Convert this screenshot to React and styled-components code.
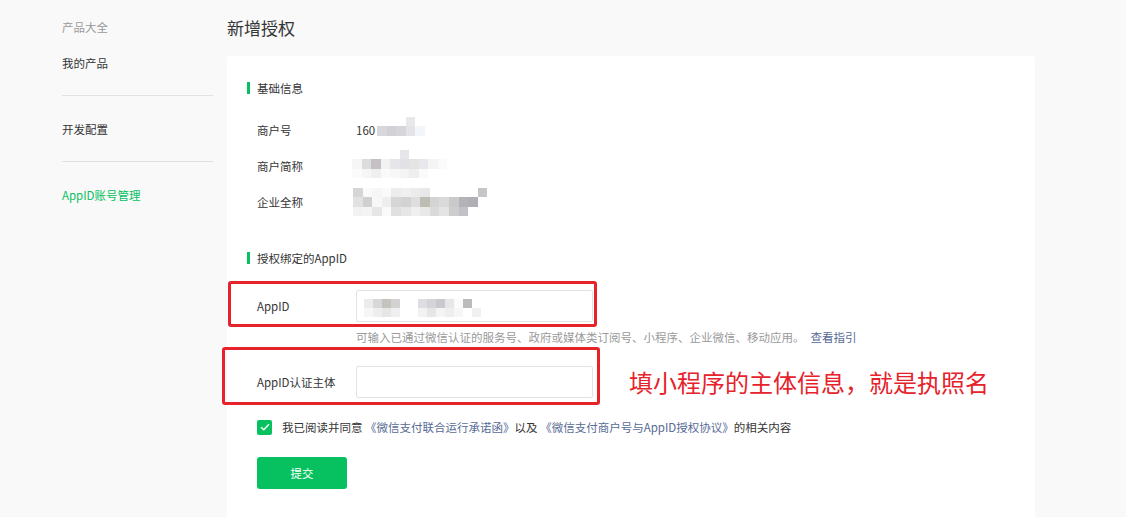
import React from "react";
import styled, { createGlobalStyle } from "styled-components";

const Global = createGlobalStyle`
  html, body { margin: 0; padding: 0; }
  body {
    background: #f9f9f9;
    font-family: "Noto Sans CJK SC", "Liberation Sans", sans-serif;
    font-size: 11.5px;
    color: #353535;
  }
  * { box-sizing: border-box; }
`;

const Layout = styled.div`
  display: flex;
  min-height: 100vh;
  padding-left: 62px;
`;

const Sidebar = styled.nav`
  width: 151px;
  flex: none;
  padding-top: 19px;
`;

const Category = styled.div`
  line-height: 16px;
  color: #9a9a9a;
  margin-bottom: -5px;
`;

const NavGroup = styled.div`
  padding: 25px 0 24px;
  border-bottom: ${(p) => (p.$last ? "none" : "1px solid #e2e2e2")};
`;

const NavItem = styled.div`
  line-height: 16px;
  color: ${(p) => (p.$active ? "#07c160" : "#353535")};
`;

const Main = styled.main`
  margin-left: 14px;
  padding-top: 16px;
  display: flex;
  flex-direction: column;
`;

const PageTitle = styled.h1`
  margin: 0 0 16px;
  font-size: 17px;
  line-height: 24px;
  font-weight: 400;
  color: #353535;
`;

const Card = styled.section`
  width: 808px;
  flex: 1;
  background: #fff;
  border-radius: 4px 4px 0 0;
  padding: 24px 20px 28px;
`;

const SectionTitle = styled.h2`
  margin: ${(p) => p.$top || 0}px 0 0;
  display: flex;
  align-items: center;
  gap: 7px;
  font-size: 11.5px;
  font-weight: 400;
  line-height: 16px;
  color: #353535;
  &::before {
    content: "";
    width: 3px;
    height: 12px;
    background: #07c160;
  }
`;

const InfoList = styled.div`
  margin-top: 16px;
  padding-left: 10px;
`;

const InfoRow = styled.div`
  display: flex;
  align-items: center;
  height: 36px;
`;

const Label = styled.div`
  width: 99px;
  flex: none;
  line-height: 16px;
  color: #353535;
`;

const Value = styled.div`
  display: flex;
  align-items: center;
  color: #353535;
  line-height: 16px;
`;

const Mosaic = styled.div`
  display: grid;
  grid-template-columns: repeat(${(p) => p.$cols}, ${(p) => p.$size}px);
  grid-auto-rows: ${(p) => p.$size}px;
  margin-left: ${(p) => p.$ml || 0}px;
  margin-top: ${(p) => p.$mt || 0}px;
  filter: blur(0.6px);
`;

const Cell = styled.span`
  background: ${(p) => p.$c};
`;

const Form = styled.div`
  padding-left: 10px;
`;

const FieldRow = styled.div`
  position: relative;
  display: flex;
  align-items: center;
  margin-top: ${(p) => p.$top}px;
`;

const InputBox = styled.div`
  width: 237px;
  height: 32px;
  border: 1px solid #e3e3e3;
  border-radius: 2px;
  background: #fff;
  display: flex;
  align-items: center;
  padding-left: 6px;
`;

const Highlight = styled.div`
  position: absolute;
  left: ${(p) => p.$l}px;
  top: ${(p) => p.$t}px;
  width: ${(p) => p.$w}px;
  height: ${(p) => p.$h}px;
  border: 3px solid #e6222b;
  border-radius: 3px;
  pointer-events: none;
`;

const Annotation = styled.div`
  margin-left: 36px;
  font-size: 24px;
  line-height: 30px;
  color: #e6222b;
  white-space: nowrap;
`;

const Hint = styled.div`
  margin-top: 7px;
  padding-left: 99px;
  line-height: 16px;
  color: #9a9a9a;
`;

const Link = styled.a`
  color: #576b95;
  text-decoration: none;
  margin-left: ${(p) => p.$ml || 0}px;
`;

const AgreeRow = styled.label`
  display: flex;
  align-items: center;
  gap: 10px;
  margin-top: 21px;
  line-height: 16px;
  color: #353535;
`;

const Check = styled.span`
  width: 15px;
  height: 15px;
  border-radius: 2px;
  background: #07c160;
  display: flex;
  align-items: center;
  justify-content: center;
  flex: none;
`;

const SubmitButton = styled.button`
  margin-top: 22px;
  width: 90px;
  height: 32px;
  border: none;
  border-radius: 3px;
  background: #07c160;
  color: #fff;
  font-family: inherit;
  font-size: 11.5px;
  cursor: pointer;
`;

const mosaicShort = [
  ["#fff", "#fff", "#fff", "#e8e8ec", "#fff"],
  ["#d8d8dc", "#d2d2d6", "#d6d6da", "#e4e4e8", "#f2f5f9"],
];

const mosaicName = [
  ["#fff", "#fff", "#fff", "#fff", "#fff", "#e6e6ea", "#fff", "#fff", "#fff", "#fff"],
  ["#f6f6f6", "#dcdcdc", "#c4c0c4", "#f2f2f2", "#e6e6ea", "#e2e2e6", "#e4e4e4", "#e8e8ec", "#f4f4f4", "#fafafa"],
  ["#fbfbfb", "#f6f6f6", "#efefef", "#fafafa", "#f7f7f7", "#f4f4f4", "#eeeeee", "#fafafa", "#fff", "#fff"],
];

const mosaicFull = [
  ["#d6d6d6", "#fafafa", "#f6f6f6", "#fafafa", "#ececec", "#f0f0f0", "#ececec", "#e8e8e8", "#fff", "#fff", "#fff", "#fff", "#fff", "#c4c6ca"],
  ["#e2e2e2", "#d0d0d0", "#f7f7f7", "#eeeeee", "#d6d6d6", "#d2d2d2", "#dedede", "#bfbcb4", "#d4d4d4", "#dadada", "#cacaca", "#b4b4b8", "#b0b0b4", "#fff"],
  ["#f2f2f2", "#f4f4f4", "#e6e6e6", "#fafafa", "#e0e0e0", "#e6e6e6", "#efefef", "#e8e8e8", "#dadada", "#e4e4e4", "#cdcdcd", "#c2c2c6", "#fff", "#fff"],
];

const mosaicAppId = [
  ["#ececec", "#d8d8d8", "#c6c2be", "#d2d2d2", "#fff", "#fff", "#dedee2", "#d4d4d8", "#cacace", "#e6e6ea", "#fafafa", "#bbbbbb", "#fff"],
  ["#f6f6f6", "#eeeeee", "#e6e6e6", "#efefef", "#fff", "#fff", "#f2f2f2", "#e6e6e6", "#f4f4f4", "#eeeeee", "#f6f6f6", "#fff", "#f0f0f0"],
];

function Pixels({ data, size, ml, mt }) {
  return (
    <Mosaic $cols={data[0].length} $size={size} $ml={ml} $mt={mt}>
      {data.flat().map((c, i) => (
        <Cell key={i} $c={c} />
      ))}
    </Mosaic>
  );
}

export default function App() {
  return (
    <>
      <Global />
      <Layout>
        <Sidebar>
          <Category>产品大全</Category>
          <NavGroup>
            <NavItem>我的产品</NavItem>
          </NavGroup>
          <NavGroup>
            <NavItem>开发配置</NavItem>
          </NavGroup>
          <NavGroup $last>
            <NavItem $active>AppID账号管理</NavItem>
          </NavGroup>
        </Sidebar>
        <Main>
          <PageTitle>新增授权</PageTitle>
          <Card>
            <SectionTitle>基础信息</SectionTitle>
            <InfoList>
              <InfoRow>
                <Label>商户号</Label>
                <Value>
                  160
                  <Pixels data={mosaicShort} size={9.5} ml={2} mt={-8} />
                </Value>
              </InfoRow>
              <InfoRow>
                <Label>商户简称</Label>
                <Value>
                  <Pixels data={mosaicName} size={9.5} ml={-4} mt={-4} />
                </Value>
              </InfoRow>
              <InfoRow>
                <Label>企业全称</Label>
                <Value>
                  <Pixels data={mosaicFull} size={9.6} ml={-3} mt={0} />
                </Value>
              </InfoRow>
            </InfoList>

            <SectionTitle $top={30}>授权绑定的AppID</SectionTitle>
            <Form>
              <FieldRow $top={24}>
                <Label>AppID</Label>
                <InputBox>
                  <Pixels data={mosaicAppId} size={9} ml={1} mt={3} />
                </InputBox>
                <Highlight $l={-29} $t={-9} $w={369} $h={46} />
              </FieldRow>
              <Hint>
                可输入已通过微信认证的服务号、政府或媒体类订阅号、小程序、企业微信、移动应用。
                <Link href="#" $ml={6}>查看指引</Link>
              </Hint>
              <FieldRow $top={21}>
                <Label>AppID认证主体</Label>
                <InputBox />
                <Highlight $l={-35} $t={-19} $w={378} $h={58} />
                <Annotation>填小程序的主体信息，就是执照名</Annotation>
              </FieldRow>
              <AgreeRow>
                <Check>
                  <svg width="10" height="8" viewBox="0 0 10 8">
                    <path d="M1 4.2 L3.8 6.8 L9 1.2" fill="none" stroke="#fff" strokeWidth="1.4" />
                  </svg>
                </Check>
                <span>
                  我已阅读并同意 <Link href="#">《微信支付联合运行承诺函》</Link>以及{" "}
                  <Link href="#">《微信支付商户号与AppID授权协议》</Link>的相关内容
                </span>
              </AgreeRow>
              <SubmitButton>提交</SubmitButton>
            </Form>
          </Card>
        </Main>
      </Layout>
    </>
  );
}
